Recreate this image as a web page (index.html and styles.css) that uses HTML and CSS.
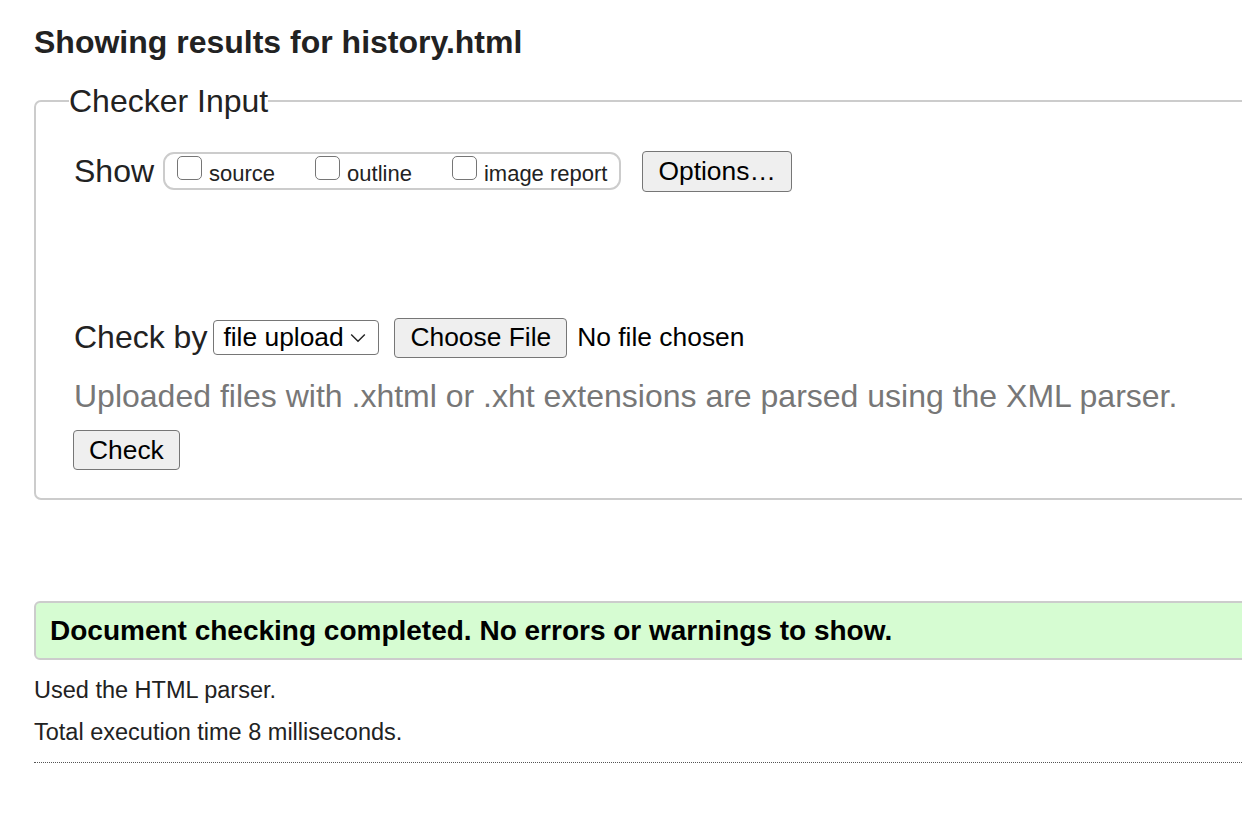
FILE: index.html
```html
<!DOCTYPE html>
<html lang="en">
<head>
<meta charset="utf-8">
<title>Nu Html Checker</title>
<link rel="stylesheet" href="styles.css">
</head>
<body>
<main class="page">
  <h2 class="title">Showing results for history.html</h2>
  <form class="checker" action="#">
    <fieldset class="checker-input">
      <legend class="legend">Checker Input</legend>
      <div class="show-row">
        <span class="row-label">Show</span>
        <div class="show-group">
          <label class="opt"><input type="checkbox" class="cb"><span class="opt-text">source</span></label>
          <label class="opt"><input type="checkbox" class="cb"><span class="opt-text">outline</span></label>
          <label class="opt"><input type="checkbox" class="cb"><span class="opt-text">image report</span></label>
        </div>
        <button type="button" class="btn btn-options">Options…</button>
      </div>
      <div class="spacer"></div>
      <div class="checkby-row">
        <span class="row-label">Check by</span>
        <div class="select">
          <span class="select-text">file upload</span>
          <svg class="chev" width="16" height="10" viewBox="0 0 16 10"><path d="M1.2 1.5 L8 8.3 L14.8 1.5" fill="none" stroke="#222" stroke-width="1.4"/></svg>
        </div>
        <button type="button" class="btn btn-file">Choose File</button>
        <span class="file-status">No file chosen</span>
      </div>
      <p class="hint">Uploaded files with .xhtml or .xht extensions are parsed using the XML parser.</p>
      <button type="button" class="btn btn-check">Check</button>
    </fieldset>
  </form>
  <p class="success">Document checking completed. No errors or warnings to show.</p>
  <p class="stats">Used the HTML parser.</p>
  <p class="stats">Total execution time 8 milliseconds.</p>
  <hr class="rule">
</main>
</body>
</html>
```

FILE: styles.css
```css
html {
  overflow: hidden;
}
body {
  margin: 0;
  background: #fff;
  color: #222;
  font-family: "Liberation Sans", Arial, sans-serif;
}
.page {
  width: 1320px;
  padding-left: 34px;
}
.title {
  margin: 24px 0 0 0;
  font-size: 32px;
  font-weight: bold;
  line-height: 36.8px;
  color: #222;
}
.checker {
  margin: 0;
}
.checker-input {
  margin: 22px 0 0 0;
  padding: 0 0 28px 38px;
  border: 2px solid #ccc;
  border-radius: 7px;
  min-inline-size: 0;
}
.legend {
  font-size: 32px;
  line-height: 36.8px;
  padding: 0;
  margin-left: -5px;
  color: #222;
}
.show-row {
  display: flex;
  align-items: center;
  margin-top: 31px;
  height: 41px;
}
.row-label {
  font-size: 32px;
  line-height: 36.8px;
}
.show-group {
  display: flex;
  align-items: flex-start;
  box-sizing: border-box;
  height: 38px;
  margin-left: 9px;
  padding: 0 12px 0 12px;
  border: 2px solid #ccc;
  border-radius: 11px;
}
.opt {
  display: flex;
  align-items: flex-start;
  margin-right: 40px;
}
.opt:last-child {
  margin-right: 0;
}
.cb {
  appearance: none;
  -webkit-appearance: none;
  box-sizing: border-box;
  width: 25px;
  height: 24px;
  margin: 2px 7px 0 0;
  border: 1.5px solid #767676;
  border-radius: 5px;
  background: #fff;
}
.opt-text {
  font-size: 22px;
  line-height: 25.3px;
  margin-top: 6.5px;
}
.btn {
  box-sizing: border-box;
  font-family: "Liberation Sans", Arial, sans-serif;
  font-size: 26.4px;
  color: #000;
  background: #efefef;
  border: 1.5px solid #767676;
  border-radius: 4px;
  padding: 0 15px;
  margin: 0;
  line-height: 1;
}
.btn-options {
  height: 41px;
  margin-left: 21px;
}
.spacer {
  height: 126px;
}
.checkby-row {
  display: flex;
  align-items: center;
  height: 40px;
}
.select {
  box-sizing: border-box;
  display: flex;
  align-items: center;
  justify-content: space-between;
  width: 166px;
  height: 35px;
  margin-left: 6px;
  padding: 0 12px 0 9px;
  border: 1.5px solid #767676;
  border-radius: 4px;
  background: #fff;
  color: #000;
}
.select-text {
  font-size: 26.4px;
  line-height: 1;
}
.chev {
  display: block;
}
.btn-file {
  height: 40px;
  margin-left: 15px;
}
.file-status {
  margin-left: 10px;
  font-size: 26.4px;
  color: #000;
}
.hint {
  margin: 20px 0 0 0;
  font-size: 32px;
  line-height: 36.8px;
  color: #777;
}
.btn-check {
  display: block;
  height: 40px;
  margin-top: 16px;
  margin-left: -1px;
}
.success {
  box-sizing: border-box;
  margin: 101px 0 0 0;
  height: 59px;
  padding: 0 14px;
  display: flex;
  align-items: center;
  font-size: 28px;
  font-weight: bold;
  color: #000;
  background: #d6fcd2;
  border: 2px solid #ccc;
  border-radius: 6px;
}
.stats {
  margin: 17px 0 0 0;
  font-size: 23.5px;
  line-height: 27px;
  color: #222;
}
.stats + .stats {
  margin-top: 15px;
}
.rule {
  margin: 16px 0 0 0;
  border: 0;
  border-top: 1px dotted #555;
  height: 0;
}
```
